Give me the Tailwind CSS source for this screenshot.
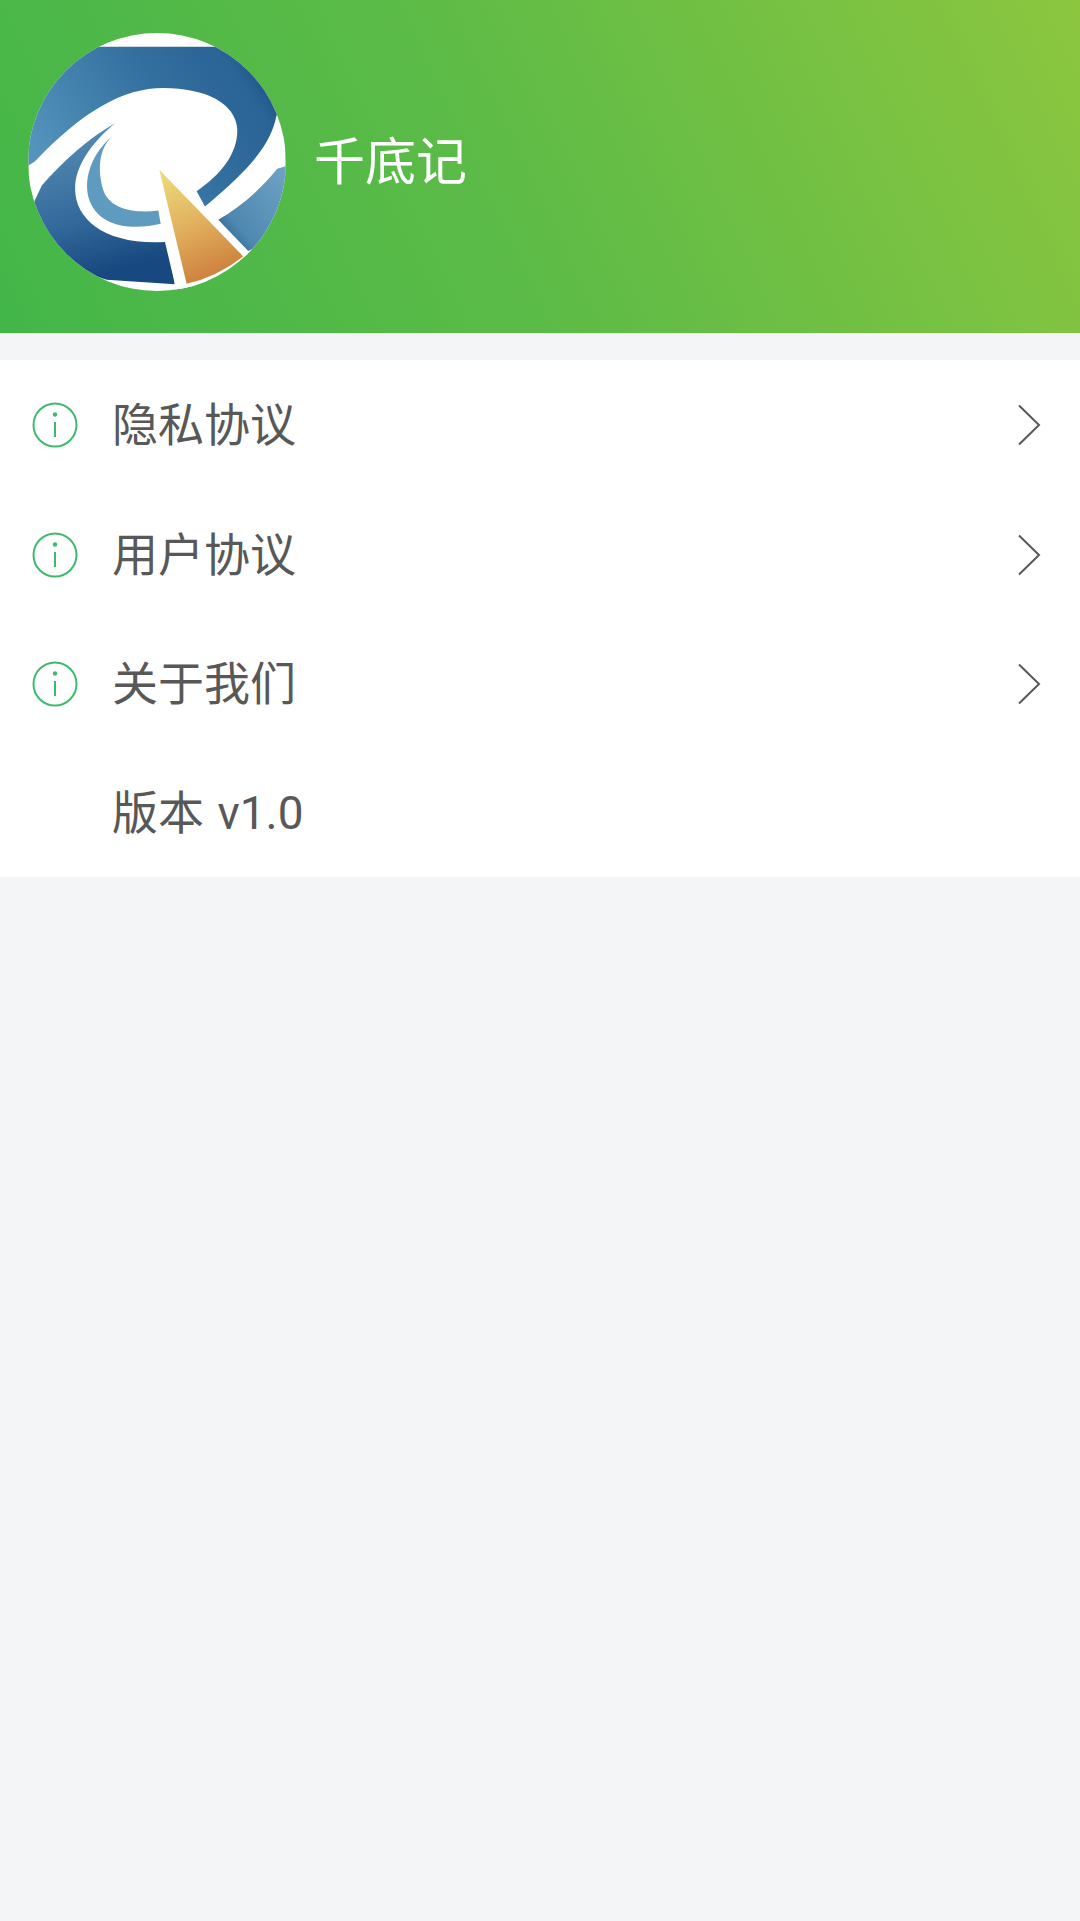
<!DOCTYPE html>
<html lang="zh">
<head>
    <meta charset="UTF-8">
    <meta name="viewport" content="width=device-width, initial-scale=1.0">
    <title>我的</title>
    <script src="https://cdn.jsdelivr.net/npm/@tailwindcss/browser@4"></script>
</head>
<body class="bg-[#f3f5f7] font-['Roboto','Noto_Sans_CJK_SC',sans-serif] min-h-[1921px]">
    <!-- header -->
    <header class="h-[333px] flex items-center pl-[28px] pb-[9px] bg-[linear-gradient(65deg,#43b649_0%,#5cbb47_45%,#8cc63f_100%)]">
        <svg class="w-[258px] h-[258px] rounded-full shrink-0" viewBox="85 97 772 775">
            <defs>
                <linearGradient id="ring" x1="0" y1="0.6" x2="1" y2="0.2">
                    <stop offset="0" stop-color="#5494bc"/>
                    <stop offset="0.55" stop-color="#336f9f"/>
                    <stop offset="0.85" stop-color="#2a6396"/>
                    <stop offset="1" stop-color="#164c80"/>
                </linearGradient>
                <linearGradient id="lower" x1="0" y1="0" x2="0.25" y2="1">
                    <stop offset="0" stop-color="#5c93b8"/>
                    <stop offset="0.65" stop-color="#33699b"/>
                    <stop offset="1" stop-color="#17487f"/>
                </linearGradient>
                <linearGradient id="side" x1="1" y1="0" x2="0" y2="1">
                    <stop offset="0" stop-color="#6fa3c6"/>
                    <stop offset="0.7" stop-color="#4f88b0"/>
                    <stop offset="1" stop-color="#1d5487"/>
                </linearGradient>
                <linearGradient id="pointer" x1="0" y1="0" x2="0.3" y2="1">
                    <stop offset="0" stop-color="#ecdf7c"/>
                    <stop offset="0.55" stop-color="#e2b05e"/>
                    <stop offset="1" stop-color="#cf8440"/>
                </linearGradient>
            </defs>
            <rect x="85" y="97" width="772" height="775" fill="#fff"/>
            <path d="M85 138H857V340L830 345C815 420 770 490 615 618L590 572C660 525 715 460 712 385C708 310 620 262 490 262C370 262 250 330 105 482L85 495Z" fill="url(#ring)"/>
            <path d="M857 497L832 505C780 570 720 620 655 658L745 752L857 700Z" fill="url(#side)"/>
            <path d="M85 640L125 555C190 480 270 410 345 368C270 430 225 500 225 565C225 660 320 735 495 725L525 852L320 838L200 800L85 700Z" fill="url(#lower)"/>
            <path d="M338 405C290 450 295 520 310 570C330 625 400 640 475 630L482 670C400 690 310 680 275 615C245 560 262 470 338 405Z" fill="#5f9bbf"/>
            <path d="M475 497L745 762L560 880L528 880Z" fill="#fff"/>
            <path d="M478 508L730 768Q650 830 560 850Z" fill="url(#pointer)"/>
        </svg>
        <h1 class="ml-[28px] text-[51px] leading-none font-normal text-white">千底记</h1>
    </header>

    <!-- menu -->
    <ul class="mt-[27px] bg-white text-[46px] leading-none text-[#585858]">
        <li class="h-[130px] flex items-center pl-[32px] pr-[39px]">
            <svg class="w-[46px] h-[46px] shrink-0" viewBox="0 0 46 46" fill="none" stroke="#3fba6c" stroke-width="2"><circle cx="23" cy="23" r="21.5"/><line x1="23" y1="20" x2="23" y2="35"/><circle cx="23" cy="12.5" r="2.2" fill="#3fba6c" stroke="none"/></svg>
            <span class="ml-[34px] flex-1">隐私协议</span>
            <svg class="w-[24px] h-[42px]" viewBox="0 0 24 42" fill="none" stroke="#585858" stroke-width="2"><path d="M2 1.5 22 21 2 40.5"/></svg>
        </li>
        <li class="h-[129px] flex items-center pl-[32px] pr-[39px]">
            <svg class="w-[46px] h-[46px] shrink-0" viewBox="0 0 46 46" fill="none" stroke="#3fba6c" stroke-width="2"><circle cx="23" cy="23" r="21.5"/><line x1="23" y1="20" x2="23" y2="35"/><circle cx="23" cy="12.5" r="2.2" fill="#3fba6c" stroke="none"/></svg>
            <span class="ml-[34px] flex-1">用户协议</span>
            <svg class="w-[24px] h-[42px]" viewBox="0 0 24 42" fill="none" stroke="#585858" stroke-width="2"><path d="M2 1.5 22 21 2 40.5"/></svg>
        </li>
        <li class="h-[129px] flex items-center pl-[32px] pr-[39px]">
            <svg class="w-[46px] h-[46px] shrink-0" viewBox="0 0 46 46" fill="none" stroke="#3fba6c" stroke-width="2"><circle cx="23" cy="23" r="21.5"/><line x1="23" y1="20" x2="23" y2="35"/><circle cx="23" cy="12.5" r="2.2" fill="#3fba6c" stroke="none"/></svg>
            <span class="ml-[34px] flex-1">关于我们</span>
            <svg class="w-[24px] h-[42px]" viewBox="0 0 24 42" fill="none" stroke="#585858" stroke-width="2"><path d="M2 1.5 22 21 2 40.5"/></svg>
        </li>
        <li class="h-[129px] flex items-center pl-[112px] [word-spacing:2px]">版本 v1.0</li>
    </ul>
</body>
</html>
